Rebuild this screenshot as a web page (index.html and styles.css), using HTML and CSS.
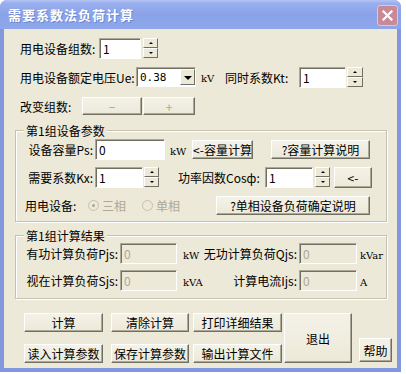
FILE: index.html
```html
<!DOCTYPE html>
<html lang="zh-CN">
<head>
  <meta charset="UTF-8">
  <title>需要系数法负荷计算</title>
  <link rel="stylesheet" href="styles.css">
</head>
<body>

<div class="window">
  <div class="titlebar">
    <span class="title">需要系数法负荷计算</span>
    <span class="close-btn">
      <svg width="11" height="11" viewBox="0 0 11 11"><path d="M1.5 1.5 L9.5 9.5 M9.5 1.5 L1.5 9.5" stroke="#fff" stroke-width="2.2" stroke-linecap="square"/></svg>
    </span>
  </div>

  <div class="client">
    <!-- top settings -->
    <div class="row row-top">
      <span class="lbl lbl-groups">用电设备组数:</span>
      <span class="field w42">1</span>
      <span class="spin"><span class="up"></span><span class="down"></span></span>
    </div>

    <div class="row row-volt">
      <span class="lbl lbl-volt">用电设备额定电压Ue:</span>
      <span class="select"><span class="select-val">0.38</span><span class="drop"></span></span>
      <span class="unit-kv">kV</span>
      <span class="lbl lbl-kt">同时系数Kt:</span>
      <span class="field w47">1</span>
      <span class="spin spin-kt"><span class="up"></span><span class="down"></span></span>
    </div>

    <div class="row row-change">
      <span class="lbl lbl-change">改变组数:</span>
      <span class="btn disabled w60">−</span>
      <span class="btn disabled w52 ml1">+</span>
    </div>

    <!-- group 1 params -->
    <div class="group group-params">
      <span class="legend">第1组设备参数</span>
      <div class="row g-row1">
        <span class="lbl lbl-r70">设备容量Ps:</span>
        <span class="field w70">0</span>
        <span class="unit unit-kw">kW</span>
        <span class="btn w61">&lt;-容量计算</span>
        <span class="btn w99 ml18">?容量计算说明</span>
      </div>
      <div class="row g-row2">
        <span class="lbl lbl-r70">需要系数Kx:</span>
        <span class="field w48">1</span>
        <span class="spin ml1"><span class="up"></span><span class="down"></span></span>
        <span class="lbl lbl-cos">功率因数Cosф:</span>
        <span class="field w48">1</span>
        <span class="spin ml2"><span class="up"></span><span class="down"></span></span>
        <span class="btn w38 ml4 h21">&lt;-</span>
      </div>
      <div class="row g-row3">
        <span class="lbl lbl-equip">用电设备:</span>
        <span class="radio radio-3"><span class="dot checked"></span>三相</span>
        <span class="radio radio-1"><span class="dot"></span>单相</span>
        <span class="btn w154">?单相设备负荷确定说明</span>
      </div>
    </div>

    <!-- group 2 results -->
    <div class="group group-result">
      <span class="legend">第1组计算结果</span>
      <div class="row r-row1">
        <span class="lbl lbl-r95">有功计算负荷Pjs:</span>
        <span class="field w57 off">0</span>
        <span class="unit unit-res">kW</span>
        <span class="lbl lbl-r96">无功计算负荷Qjs:</span>
        <span class="field w58 off">0</span>
        <span class="unit ml3">kVar</span>
      </div>
      <div class="row r-row2">
        <span class="lbl lbl-r95">视在计算负荷Sjs:</span>
        <span class="field w57 off">0</span>
        <span class="unit unit-res">kVA</span>
        <span class="lbl lbl-r96">计算电流Ijs:</span>
        <span class="field w58 off">0</span>
        <span class="unit ml3">A</span>
      </div>
    </div>

    <!-- action buttons -->
    <div class="actions">
      <div class="action-grid">
        <span class="btn">计算</span>
        <span class="btn">清除计算</span>
        <span class="btn">打印详细结果</span>
        <span class="btn">读入计算参数</span>
        <span class="btn">保存计算参数</span>
        <span class="btn">输出计算文件</span>
      </div>
      <span class="btn btn-exit">退出</span>
      <span class="btn btn-help">帮助</span>
    </div>
  </div>
</div>

</body>
</html>
```

FILE: styles.css
```css
body {
  margin: 0;
  padding: 0;
  background: #fff;
  font-family: "Noto Sans CJK SC", sans-serif;
  font-size: 12px;
  color: #000;
}

/* Window frame */
.window {
  width: 401px;
  box-sizing: border-box;
  padding: 0 4px 4px;
  background: #8197de;
  border-radius: 7px 7px 0 0;
}

.titlebar {
  display: flex;
  align-items: center;
  justify-content: space-between;
  height: 29px;
  margin: 0 -4px;
  padding: 0 3px 0 8px;
  border-radius: 7px 7px 0 0;
  background: linear-gradient(to bottom, #b4c4f2 0%, #98afee 12%, #8aa2e8 50%, #8ea6ea 100%);
}

.title {
  color: #fff;
  font-weight: bold;
  font-size: 13px;
  letter-spacing: 1px;
  text-shadow: 1px 1px 0 #7086d0;
}

.close-btn {
  display: flex;
  align-items: center;
  justify-content: center;
  width: 19px;
  height: 19px;
  margin-top: 1px;
  border: 1px solid #e6c3cd;
  border-radius: 3px;
  background: #c98a98;
}

.client {
  height: 339px;
  box-sizing: border-box;
  padding: 8px 0 0 11px;
  background: #ece9d8;
}

/* Rows */
.row {
  display: flex;
  align-items: center;
}

.row-top {
  height: 22px;
  padding-left: 5px;
}

.row-volt {
  height: 22px;
  margin-top: 7px;
  padding-left: 5px;
}

.row-change {
  height: 18px;
  margin-top: 9px;
  padding-left: 5px;
}

.lbl {
  flex: none;
  white-space: nowrap;
}

.lbl-groups { width: 79px; }
.lbl-volt { width: 116px; }
.lbl-kt { width: 74px; }
.lbl-change { width: 62px; }
.lbl-r70 { width: 68px; padding-right: 2px; text-align: right; }
.lbl-cos { width: 87px; margin-left: 19px; }
.lbl-equip { width: 63px; }
.lbl-r95 { width: 93px; padding-right: 2px; text-align: right; }
.lbl-r96 { width: 94px; padding-right: 2px; text-align: right; }

/* Edit boxes */
.field {
  flex: none;
  box-sizing: border-box;
  height: 21px;
  padding: 1px 0 0 3px;
  line-height: 17px;
  background: #fff;
  border: 1px solid;
  border-color: #aca899 #fff #fff #aca899;
  box-shadow: inset 1px 1px 0 #716f64;
}

.field.off {
  background: #ece9d8;
  color: #aca899;
}

.w42 { width: 42px; }
.w47 { width: 47px; }
.w48 { width: 48px; }
.w57 { width: 57px; }
.w58 { width: 58px; }
.w70 { width: 70px; }

/* Spin buttons */
.spin {
  flex: none;
  display: flex;
  flex-direction: column;
  width: 15px;
  height: 20px;
  margin-left: 2px;
}

.spin-kt { margin-left: 1px; width: 16px; }

.spin .up,
.spin .down {
  position: relative;
  flex: 1;
  box-sizing: border-box;
  background: #ece9d8;
  border: 1px solid;
  border-color: #fff #716f64 #716f64 #fff;
}

.spin .up::after,
.spin .down::after {
  content: "";
  position: absolute;
  left: 50%;
  top: 50%;
  margin: -1px 0 0 -2px;
  border-left: 2px solid transparent;
  border-right: 2px solid transparent;
}

.spin .up::after { border-bottom: 2px solid #000; }
.spin .down::after { border-top: 2px solid #000; }

/* Drop-down */
.select {
  flex: none;
  display: flex;
  box-sizing: border-box;
  width: 60px;
  height: 20px;
  background: #fff;
  border: 1px solid;
  border-color: #aca899 #fff #fff #aca899;
  box-shadow: inset 1px 1px 0 #716f64;
}

.select-val {
  flex: 1;
  padding: 2px 0 0 3px;
  font-family: "DejaVu Sans Mono", monospace;
  font-size: 11px;
  line-height: 15px;
}

.drop {
  position: relative;
  width: 15px;
  margin: 1px 0 1px 0;
  box-sizing: border-box;
  background: #ece9d8;
  border: 1px solid;
  border-color: #fff #716f64 #716f64 #fff;
}

.drop::after {
  content: "";
  position: absolute;
  left: 3px;
  top: 6px;
  border-left: 4px solid transparent;
  border-right: 4px solid transparent;
  border-top: 4px solid #000;
}

.unit-kv {
  width: 24px;
  margin-left: 5px;
  padding-top: 3px;
  font-family: "DejaVu Serif", serif;
  font-size: 10px;
}

.unit {
  flex: none;
  font-family: "DejaVu Serif", serif;
  font-size: 10px;
  padding-top: 4px;
}

.unit-kw { width: 22px; margin-left: 5px; }
.unit-res { width: 20px; margin-left: 6px; }

/* Buttons */
.btn {
  flex: none;
  display: flex;
  align-items: center;
  justify-content: center;
  box-sizing: border-box;
  height: 19px;
  white-space: nowrap;
  background: linear-gradient(to bottom, #f4f2e8, #ece9d8);
  border: 1px solid;
  border-color: #fff #716f64 #716f64 #fff;
  box-shadow: inset -1px -1px 0 #aca899;
}

.btn.disabled {
  color: #aca899;
  height: 18px;
}

.w38 { width: 38px; }
.w52 { width: 52px; }
.w60 { width: 60px; }
.w61 { width: 61px; }
.w99 { width: 99px; }
.w154 { width: 154px; }
.h21 { height: 21px; }

.ml1 { margin-left: 1px; }
.ml2 { margin-left: 2px; }
.ml3 { margin-left: 3px; }
.ml4 { margin-left: 4px; }
.ml18 { margin-left: 18px; }

/* Group boxes */
.group {
  position: relative;
  width: 372px;
  box-sizing: border-box;
  padding-left: 9px;
  border: 1px solid #c5c2b2;
  box-shadow: inset 1px 1px 0 #fff, 1px 1px 0 #fff;
}

.legend {
  position: absolute;
  top: -8px;
  left: 8px;
  padding: 0 2px;
  background: #ece9d8;
  line-height: 15px;
}

.group-params {
  height: 92px;
  margin-top: 15px;
  padding-top: 7px;
}

.g-row1 { height: 22px; }
.g-row2 { height: 22px; margin-top: 6px; }
.g-row3 { height: 19px; margin-top: 8px; }

.radio {
  display: flex;
  align-items: center;
  gap: 3px;
  color: #aca899;
}

.radio-3 { width: 54px; }
.radio-1 { width: 74px; }

.dot {
  position: relative;
  width: 11px;
  height: 11px;
  box-sizing: border-box;
  border: 1px solid #c4c1b4;
  border-radius: 50%;
  background: #ece9d8;
}

.dot.checked::after {
  content: "";
  position: absolute;
  left: 3px;
  top: 3px;
  width: 3px;
  height: 3px;
  border-radius: 50%;
  background: #aca899;
}

.group-result {
  height: 64px;
  margin-top: 13px;
  padding-top: 7px;
}

.r-row1 { height: 21px; }
.r-row2 { height: 21px; margin-top: 6px; }

/* Bottom buttons */
.actions {
  display: flex;
  align-items: flex-end;
  margin-top: 14px;
  padding-left: 9px;
}

.action-grid {
  display: grid;
  grid-template-columns: 79px 78px 85px;
  grid-template-rows: 19px 19px;
  column-gap: 8px;
  row-gap: 12px;
}

.action-grid .btn:nth-child(3n) {
  margin-left: -4px;
}

.btn-exit {
  width: 68px;
  height: 50px;
  margin-left: 2px;
}

.btn-help {
  width: 33px;
  height: 24px;
  margin-left: 7px;
  margin-bottom: 1px;
}
```
